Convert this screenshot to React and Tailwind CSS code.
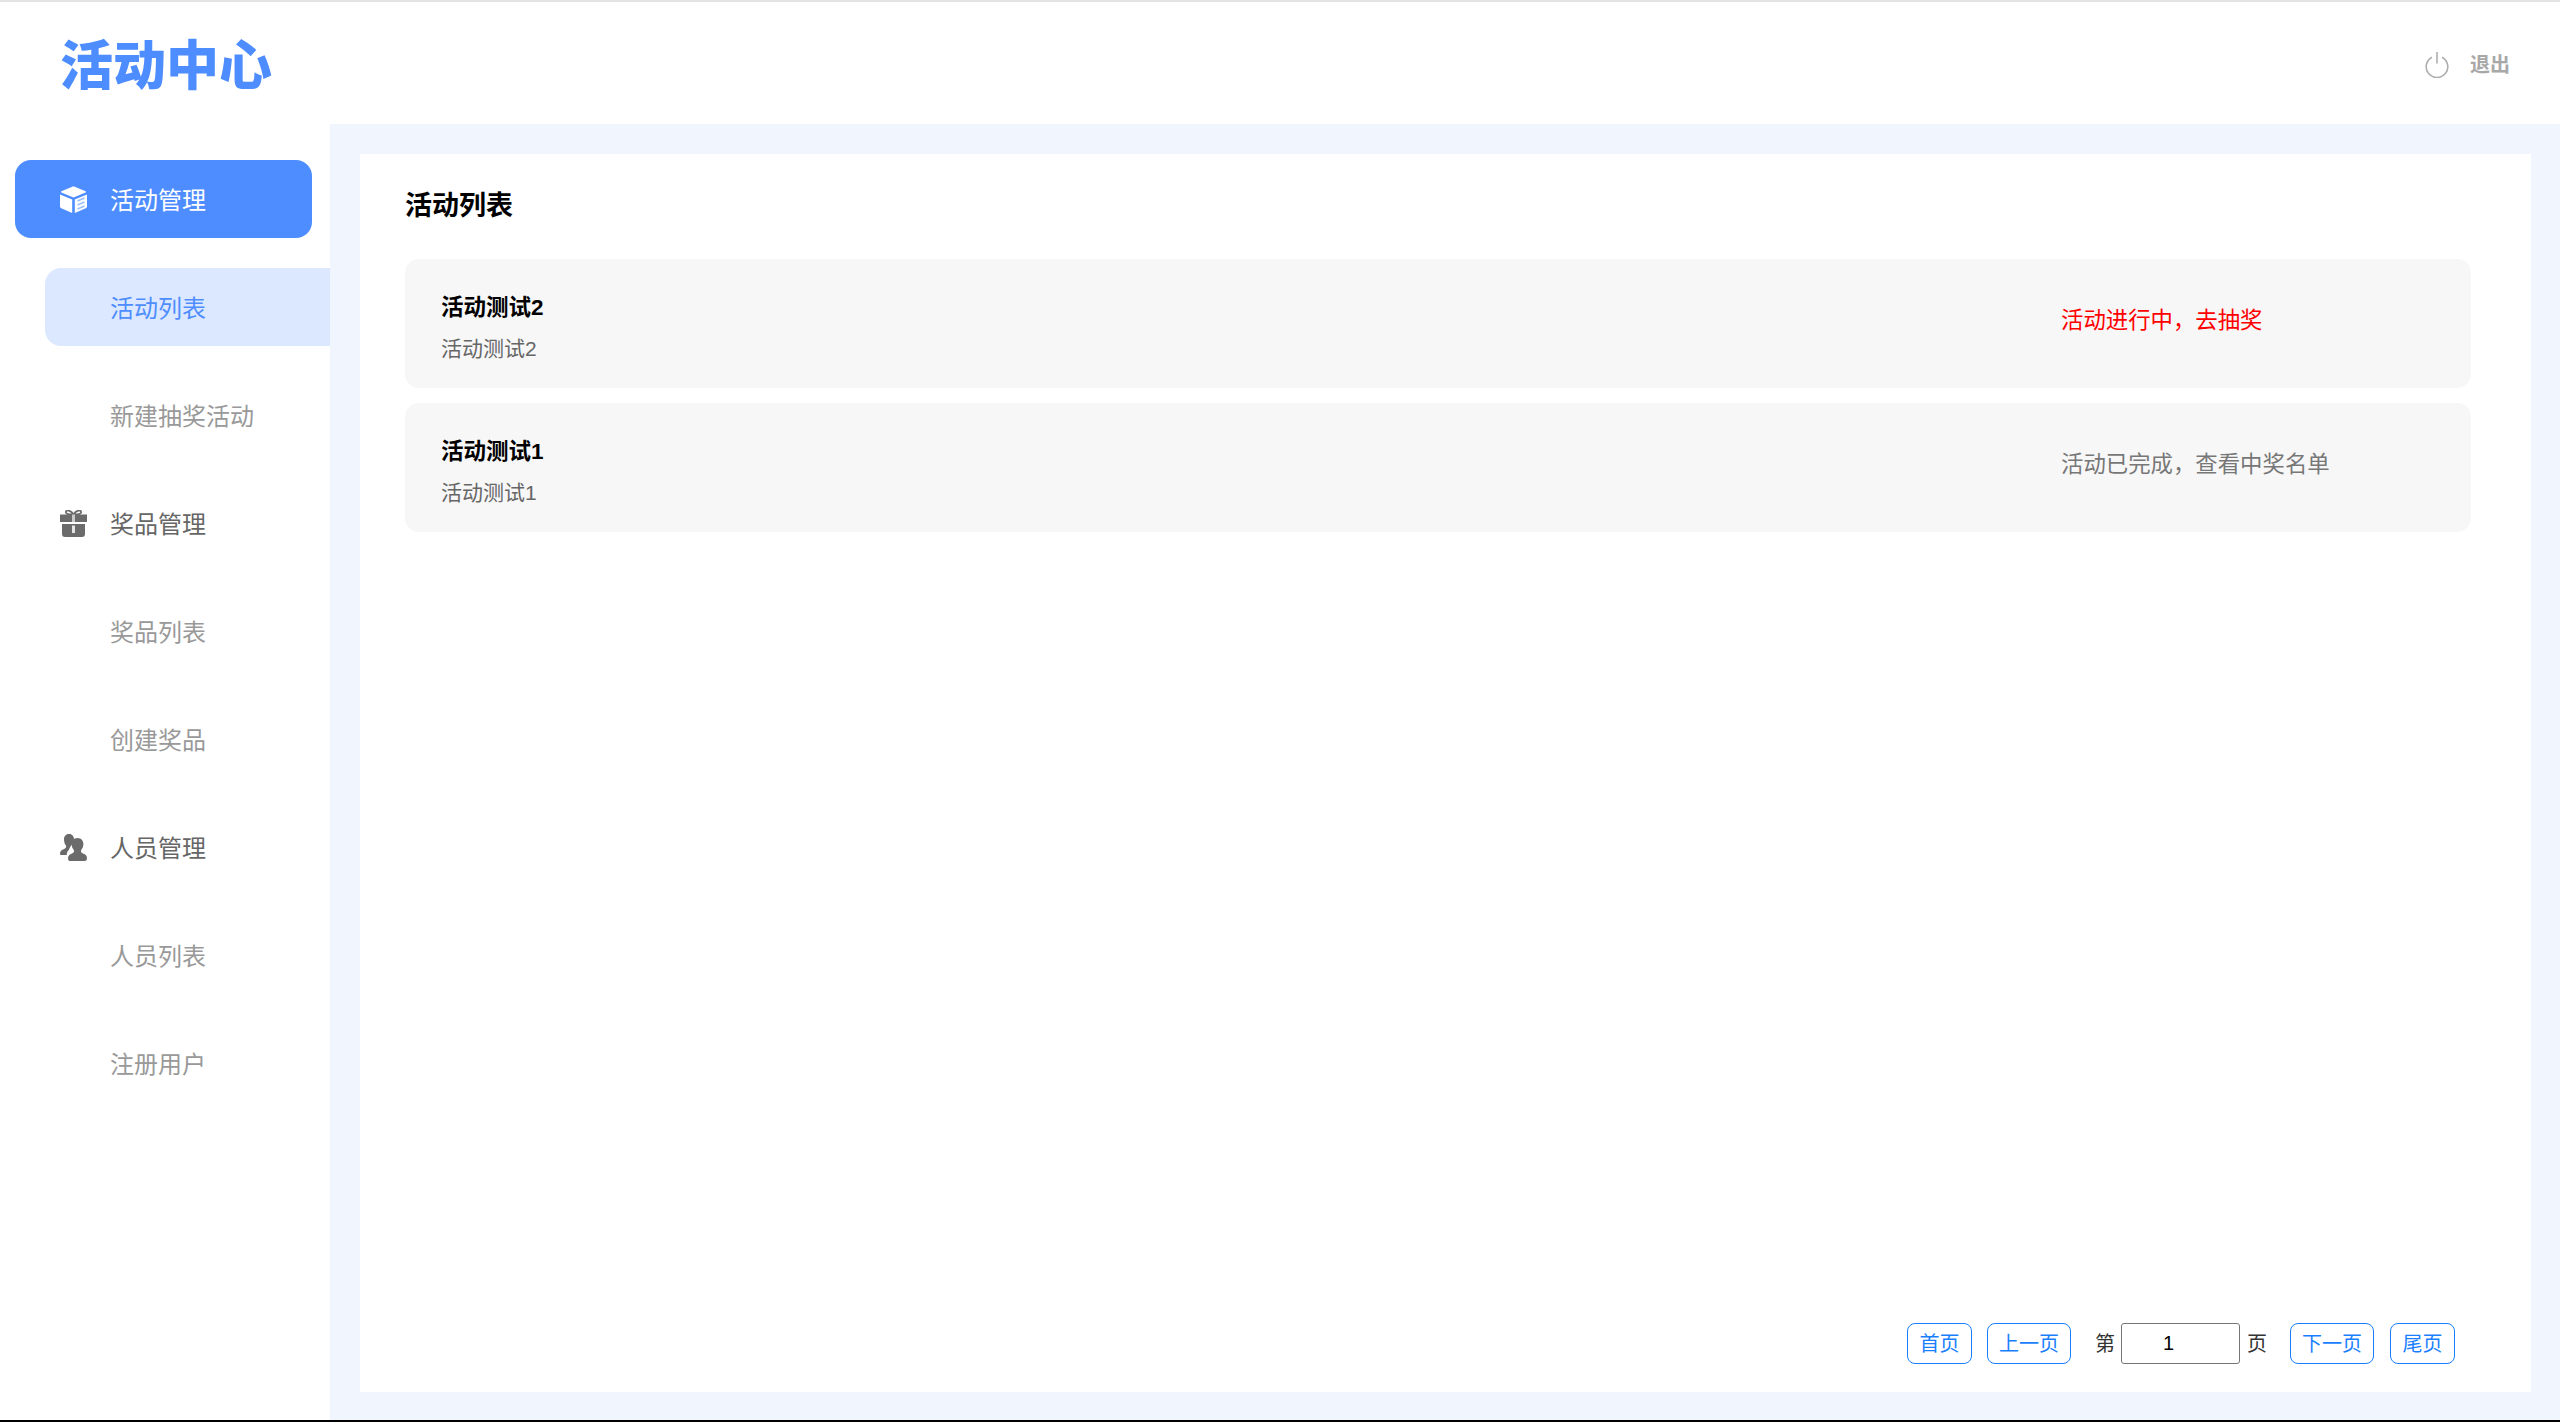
const FONT = "font-['Liberation_Sans','Noto_Sans_CJK_SC',sans-serif]";

function CubeIcon() {
  return (
    <svg width="27" height="27" viewBox="0 0 27 27" className="shrink-0">
      <path d="M13.5 0.3 L25.6 5.2 Q26.5 5.8 25.6 6.4 L13.5 11.6 L1.4 6.4 Q0.5 5.8 1.4 5.2 Z" fill="#fff" />
      <path d="M0 8.4 L12.2 13.6 V27 L1.2 22.2 Q0 21.6 0 20.4 Z" fill="#fff" />
      <path d="M27 8.4 L14.8 13.6 V27 L25.8 22.2 Q27 21.6 27 20.4 Z" fill="#fff" />
      <path d="M17.5 15 L24.5 12 M17.5 19 L24.5 16 M17.5 23 L24.5 20" stroke="#9dc0ff" strokeWidth="1.6" fill="none" />
    </svg>
  );
}

function GiftIcon() {
  return (
    <svg width="27" height="27" viewBox="0 0 27 27" className="shrink-0">
      <path d="M13.5 4.5 C11 0 6 -0.5 5.8 2.2 C5.7 4 9 4.5 13.5 4.5 C18 4.5 21.3 4 21.2 2.2 C21 -0.5 16 0 13.5 4.5 Z" fill="none" stroke="#6b6b6b" strokeWidth="1.8" />
      <rect x="0" y="4.5" width="27" height="7.5" fill="#6b6b6b" />
      <path d="M2 14 H25 V24 Q25 27 22 27 H5 Q2 27 2 24 Z" fill="#6b6b6b" />
      <rect x="12" y="4.5" width="3" height="7.5" fill="#c9c9c9" />
      <rect x="12" y="15.5" width="3" height="7.5" fill="#e4e4e4" />
    </svg>
  );
}

function PeopleIcon() {
  return (
    <svg width="27" height="27" viewBox="0 0 27 27" className="shrink-0">
      <path d="M9 0 C12.5 0 14 2.6 14 5.4 C14 8 13 9.5 11.6 11 C9.8 13 9.4 15 8.8 16 C7.2 17 6.8 19 6.8 21 H0.8 Q0 21 0 20 C0 17 1.5 16 4.2 15 C6 14.2 6.5 13.2 6 11.5 C4.8 10 4 8 4 5.4 C4 2.6 5.5 0 9 0 Z" fill="#6b6b6b" />
      <path d="M17.5 4 C21.5 4 23.4 7 23.4 10 C23.4 12.6 22.4 14.6 21.2 16 C20.6 17.6 21 18.6 23 19.6 C25.6 20.6 27 21.6 27 24.6 Q27 27 25 27 H9.5 Q8 27 8 24.6 C8 21.6 9.6 20.6 12 19.6 C14 18.6 14.4 17.6 13.8 16 C12.6 14.6 11.6 12.6 11.6 10 C11.6 7 13.5 4 17.5 4 Z" fill="#6b6b6b" />
    </svg>
  );
}

function PowerIcon() {
  return (
    <svg width="24" height="26" viewBox="0 0 24 26" className="shrink-0" fill="none" stroke="#aeaeae" strokeWidth="1.6">
      <path d="M7 5.2 A10.8 10.8 0 1 0 17 5.2" />
      <path d="M12 0 V11.5" />
    </svg>
  );
}

function NavGroup({ icon, label, active }) {
  return (
    <div className={`ml-[15px] mr-[18px] h-[78px] mb-[30px] rounded-[16px] pl-[45px] flex items-center gap-[23px] text-[24px] ${active ? "bg-[#4e8dff] text-white" : "text-[#666666]"}`}>
      {icon}
      <span className="pt-[3px]">{label}</span>
    </div>
  );
}

function NavItem({ label, active }) {
  return (
    <div className={`ml-[45px] h-[78px] mb-[30px] rounded-l-[16px] pl-[65px] pt-[3px] flex items-center text-[24px] ${active ? "bg-[#dce8ff] text-[#4e8dff]" : "text-[#999999]"}`}>
      {label}
    </div>
  );
}

function Row({ title, action, actionClass }) {
  return (
    <div className="h-[129px] rounded-[14px] bg-[#f7f7f7] flex items-center justify-between pl-[36px] mb-[15px]">
      <div className="flex flex-col pt-[10px]">
        <div className="text-[22.5px] leading-[30px] font-bold text-black">{title}</div>
        <div className="text-[21px] leading-[30px] mt-[11px] text-[#666666]">{title}</div>
      </div>
      <div className={`w-[410px] text-[22.4px] leading-[30px] -mt-[5px] ${actionClass}`}>{action}</div>
    </div>
  );
}

function PageButton({ label, w }) {
  return (
    <button className={`${w} h-[41px] rounded-[8px] border-[1.5px] border-[#1a7fff] bg-white text-[#1a7fff] text-[20px] flex items-center justify-center`}>
      {label}
    </button>
  );
}

export default function App() {
  return (
    <div className={`${FONT} h-[1422px] flex flex-col bg-white border-t-2 border-t-[#e4e4e4] border-b-2 border-b-black`}>
      <header className="h-[122px] shrink-0 flex items-center justify-between pl-[60px] pr-[50px]">
        <div className="text-[53px] leading-none font-black text-[#4e8dff] mt-[7px]">活动中心</div>
        <div className="flex items-center gap-[21px] mt-[4px]">
          <PowerIcon />
          <span className="text-[20px] font-bold text-[#a8a8a8]">退出</span>
        </div>
      </header>
      <div className="flex flex-1 min-h-0">
        <aside className="w-[330px] shrink-0 pt-[36px]">
          <NavGroup icon={<CubeIcon />} label="活动管理" active />
          <NavItem label="活动列表" active />
          <NavItem label="新建抽奖活动" />
          <NavGroup icon={<GiftIcon />} label="奖品管理" />
          <NavItem label="奖品列表" />
          <NavItem label="创建奖品" />
          <NavGroup icon={<PeopleIcon />} label="人员管理" />
          <NavItem label="人员列表" />
          <NavItem label="注册用户" />
        </aside>
        <main className="flex-1 min-w-0 bg-[#f1f5fd] pt-[30px] pl-[30px] pr-[29px] pb-[28px]">
          <div className="h-full bg-white flex flex-col pt-[34px] pl-[45px] pr-[60px] pb-[28px]">
            <h1 className="text-[27px] leading-[36px] font-bold text-black mb-[35px]">活动列表</h1>
            <Row title="活动测试2" action="活动进行中，去抽奖" actionClass="text-[#ff0000]" />
            <Row title="活动测试1" action="活动已完成，查看中奖名单" actionClass="text-[#777777]" />
            <div className="mt-auto flex items-center justify-end pr-[16px] text-[20px] text-[#333333]">
              <PageButton label="首页" w="w-[65px]" />
              <div className="w-[15px]" />
              <PageButton label="上一页" w="w-[84px]" />
              <span className="ml-[24px] mr-[6px]">第</span>
              <input
                readOnly
                value="1"
                className="w-[119px] h-[41px] rounded-[3px] border border-[#767676] bg-white text-[20px] text-black text-center pr-[24px]"
              />
              <span className="ml-[7px] mr-[23px]">页</span>
              <PageButton label="下一页" w="w-[84px]" />
              <div className="w-[16px]" />
              <PageButton label="尾页" w="w-[65px]" />
            </div>
          </div>
        </main>
      </div>
    </div>
  );
}
